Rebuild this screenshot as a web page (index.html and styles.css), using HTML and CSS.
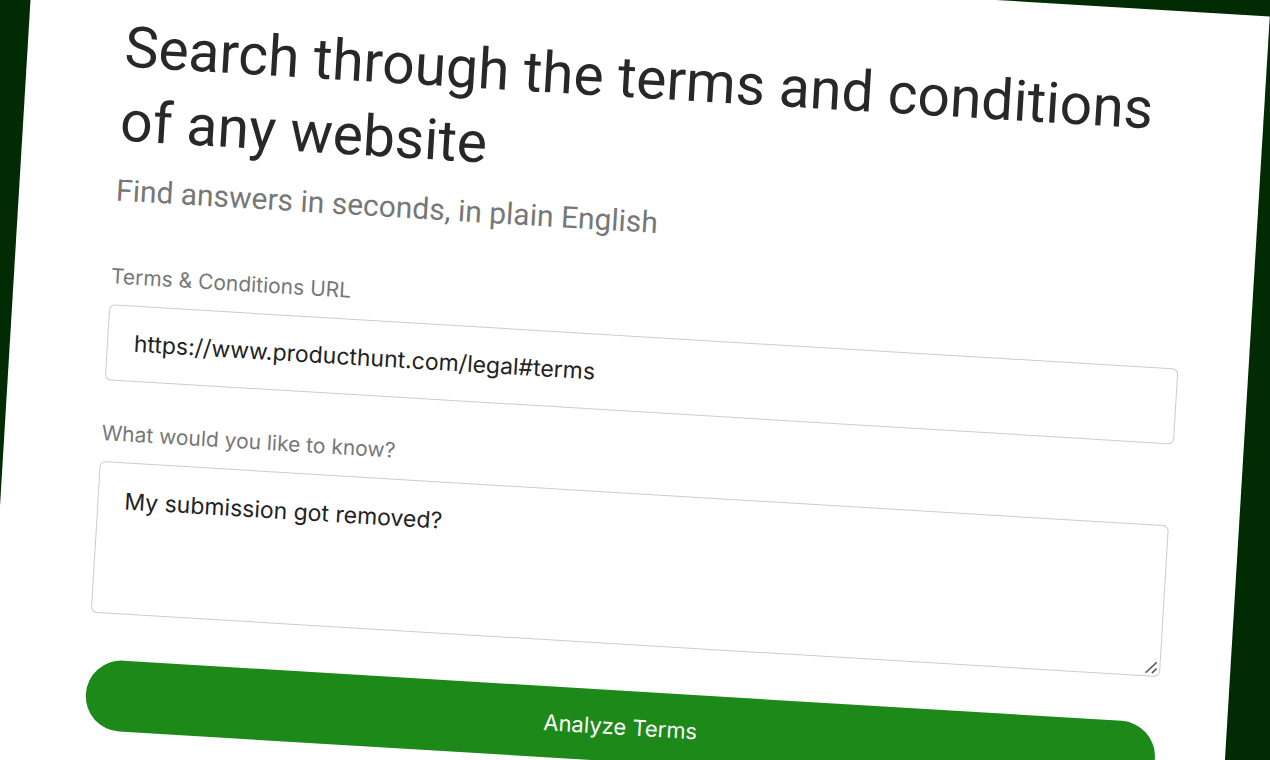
FILE: index.html
```html
<!DOCTYPE html>
<html lang="en">
<head>
<meta charset="utf-8">
<meta name="viewport" content="width=device-width, initial-scale=1">
<title>Terms search</title>
<link rel="stylesheet" href="styles.css">
</head>
<body>
<main class="card">
  <h1 class="title">Search through the terms and conditions of any website</h1>
  <p class="subtitle">Find answers in seconds, in plain English</p>
  <form class="form">
    <div class="field">
      <label class="label" for="url">Terms &amp; Conditions URL</label>
      <input class="control" id="url" type="text" value="https://www.producthunt.com/legal#terms">
    </div>
    <div class="field">
      <label class="label" for="question">What would you like to know?</label>
      <div class="area">
        <textarea class="control control-area" id="question" spellcheck="false">My submission got removed?</textarea>
        <svg class="grip" viewBox="0 0 12 12" aria-hidden="true"><path d="M0.5 11.5 11 0.5M6.8 11.5 11.3 6.8"/></svg>
      </div>
    </div>
    <button class="submit" type="button">Analyze Terms</button>
  </form>
</main>
</body>
</html>
```

FILE: styles.css
```css
* {
  box-sizing: border-box;
}

body {
  margin: 0;
  height: 100vh;
  overflow: hidden;
  display: flow-root;
  background: #002b03;
  font-family: Inter, "Liberation Sans", sans-serif;
}

.card {
  margin: -58px 0 0 34px;
  width: calc(100% - 32px);
  min-height: calc(100vh + 140px);
  padding: 63px 70px 48px 97px;
  background: #fff;
  color: #282828;
  transform: rotate(3.45deg);
  transform-origin: 0 0;
}

.title {
  margin: 0;
  font-family: Roboto, "Liberation Sans", sans-serif;
  font-size: 57px;
  font-weight: 400;
  line-height: 74px;
}

.subtitle {
  margin: 12px 0 52px;
  font-family: Roboto, "Liberation Sans", sans-serif;
  font-size: 30px;
  line-height: 40px;
  color: #777;
}

.form {
  display: flex;
  flex-direction: column;
}

.field {
  display: flex;
  flex-direction: column;
  gap: 14px;
  margin-bottom: 39px;
}

.field:last-of-type {
  margin-bottom: 46px;
}

.label {
  font-size: 21px;
  line-height: 28px;
  color: #777;
}

.control {
  display: block;
  width: 100%;
  height: 76px;
  padding: 0 26px;
  border: 1px solid #ccc;
  border-radius: 6px;
  outline: 0;
  background: #fff;
  color: #222;
  font-family: inherit;
  font-size: 23px;
  line-height: 32px;
}

.area {
  position: relative;
}

.control-area {
  height: 152px;
  padding: 22px 26px;
  resize: none;
}

.grip {
  position: absolute;
  right: 3px;
  bottom: 3px;
  width: 12px;
  height: 12px;
  fill: none;
  stroke: #555;
  stroke-width: 1.5;
}

.submit {
  height: 71px;
  padding: 0;
  border: 0;
  border-radius: 36px;
  background: #1c8919;
  color: #fff;
  font-family: inherit;
  font-size: 22px;
}
```
